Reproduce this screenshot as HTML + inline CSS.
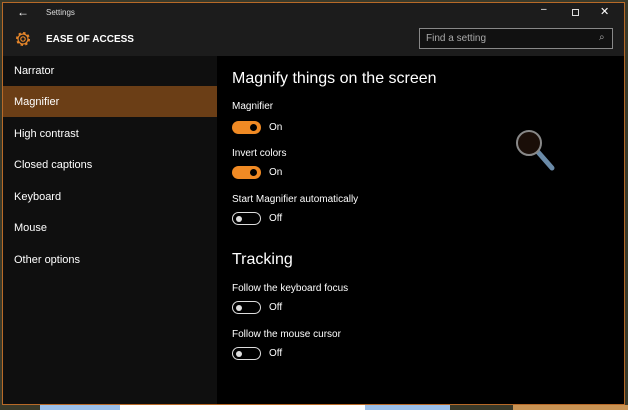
<!DOCTYPE html><html><head><style>
*{margin:0;padding:0;box-sizing:border-box}
body{width:628px;height:410px;background:#3a3a2a;position:relative;overflow:hidden;font-family:"Liberation Sans",sans-serif;color:#fff}
.win{position:absolute;left:2px;top:2px;width:623px;height:403px;border:1px solid #b86a28;background:#1c1c1c}
.t{position:absolute;font-size:11px;white-space:nowrap}
.side{position:absolute;left:3px;top:56px;width:214px;height:348px;background:#0f0f0f}
.main{position:absolute;left:217px;top:56px;width:407px;height:348px;background:#000}
.sel{position:absolute;left:3px;top:86px;width:214px;height:31px;background:#6b3e16}
.tg{position:absolute;width:29px;height:13px;border-radius:7px}
.on{background:#f08a24}.on:after{content:"";position:absolute;right:4px;top:3px;width:7px;height:7px;border-radius:50%;background:#000}
.off{border:1.5px solid #ddd}.off:after{content:"";position:absolute;left:3px;top:2.5px;width:6px;height:6px;border-radius:50%;background:#ddd}
</style></head><body>
<div class="win"></div>
<div style="position:absolute;left:40px;top:405px;width:410px;height:5px;background:#9cc0ea"></div>
<div style="position:absolute;left:120px;top:405px;width:245px;height:5px;background:#fff"></div>
<div style="position:absolute;left:513px;top:405px;width:115px;height:5px;background:#c99455"></div>
<div class="t" style="left:17px;top:5px;font-size:12px">←</div>
<div class="t" style="left:46px;top:8px;font-size:8px;color:#ddd">Settings</div>
<div class="t" style="left:541px;top:4px;font-size:10px">–</div>
<div style="position:absolute;left:572px;top:9px;width:7px;height:7px;border:1px solid #ddd"></div>
<div class="t" style="left:600px;top:5px;font-size:11px">✕</div>
<svg style="position:absolute;left:14px;top:30px" width="18" height="18" viewBox="0 0 18 18"><circle cx="9" cy="9" r="6" fill="none" stroke="#e8872a" stroke-width="2" stroke-dasharray="2.4 2.3"/><circle cx="9" cy="9" r="5" fill="none" stroke="#e8872a" stroke-width="1.2"/><circle cx="9" cy="9" r="2.2" fill="none" stroke="#e8872a" stroke-width="1.2"/></svg>
<div class="t" style="left:46px;top:34px;font-size:10px;font-weight:bold">EASE OF ACCESS</div>
<div style="position:absolute;left:419px;top:28px;width:194px;height:21px;border:1px solid #888;background:#111"></div>
<div class="t" style="left:426px;top:33px;font-size:10px;color:#aaa">Find a setting</div>
<div class="t" style="left:599px;top:32px;font-size:10px;color:#aaa">⌕</div>
<div class="side"></div><div class="main"></div><div class="sel"></div>
<div class="t" style="left:14px;top:65px">Narrator</div>
<div class="t" style="left:14px;top:96px">Magnifier</div>
<div class="t" style="left:14px;top:128px">High contrast</div>
<div class="t" style="left:14px;top:159px">Closed captions</div>
<div class="t" style="left:14px;top:191px">Keyboard</div>
<div class="t" style="left:14px;top:222px">Mouse</div>
<div class="t" style="left:14px;top:254px">Other options</div>
<div class="t" style="left:232px;top:70px;font-size:16px">Magnify things on the screen</div>
<div class="t" style="left:232px;top:101px;font-size:10px">Magnifier</div>
<div class="tg on" style="left:232px;top:121px"></div><div class="t" style="left:269px;top:122px;font-size:10px">On</div>
<div class="t" style="left:232px;top:148px;font-size:10px">Invert colors</div>
<div class="tg on" style="left:232px;top:166px"></div><div class="t" style="left:269px;top:167px;font-size:10px">On</div>
<div class="t" style="left:232px;top:194px;font-size:10px">Start Magnifier automatically</div>
<div class="tg off" style="left:232px;top:212px"></div><div class="t" style="left:269px;top:213px;font-size:10px">Off</div>
<div class="t" style="left:232px;top:251px;font-size:16px">Tracking</div>
<div class="t" style="left:232px;top:283px;font-size:10px">Follow the keyboard focus</div>
<div class="tg off" style="left:232px;top:301px"></div><div class="t" style="left:269px;top:302px;font-size:10px">Off</div>
<div class="t" style="left:232px;top:329px;font-size:10px">Follow the mouse cursor</div>
<div class="tg off" style="left:232px;top:347px"></div><div class="t" style="left:269px;top:348px;font-size:10px">Off</div>
<svg style="position:absolute;left:514px;top:128px" width="44" height="46" viewBox="0 0 44 46"><line x1="24" y1="24" x2="38" y2="40" stroke="#6a8aa8" stroke-width="5" stroke-linecap="round"/><circle cx="15" cy="15" r="12" fill="#1a0e08" stroke="#888" stroke-width="2"/></svg>
</body></html>
